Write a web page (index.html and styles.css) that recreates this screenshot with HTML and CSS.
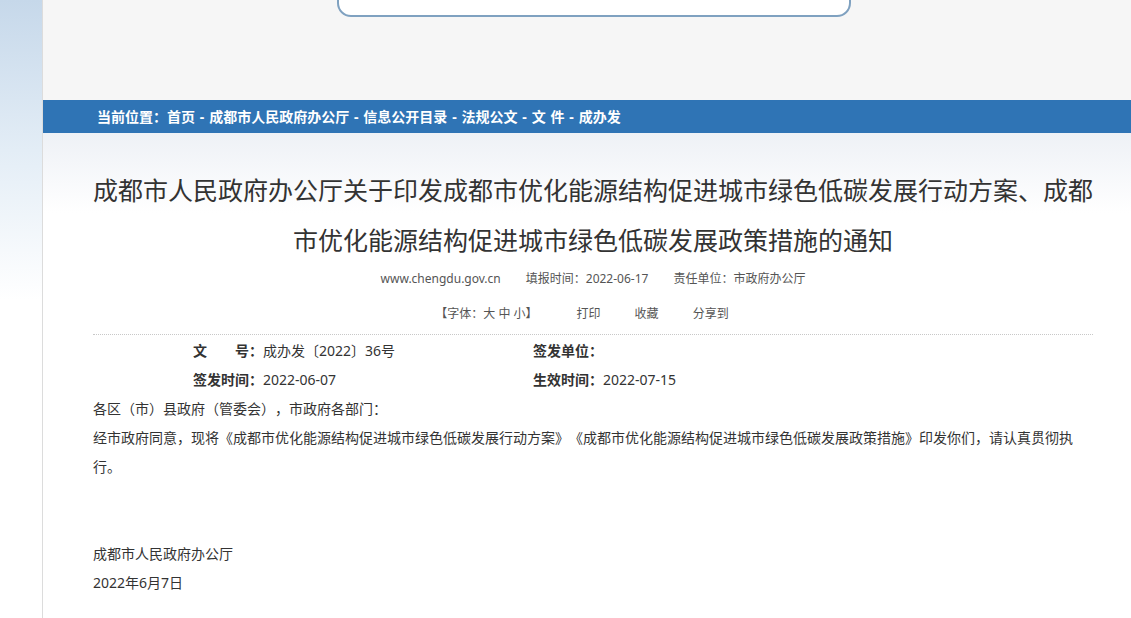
FILE: index.html
```html
<!DOCTYPE html>
<html lang="zh-CN">
<head>
  <meta charset="utf-8">
  <title>成都市人民政府办公厅关于印发成都市优化能源结构促进城市绿色低碳发展行动方案、成都市优化能源结构促进城市绿色低碳发展政策措施的通知</title>
  <link rel="stylesheet" href="styles.css">
</head>
<body>
  <div class="side"></div>
  <div class="main">
    <div class="header">
      <div class="search"></div>
    </div>
    <div class="crumb">
      <div class="wrap">当前位置：首页 - 成都市人民政府办公厅 - 信息公开目录 - 法规公文 - 文 件 - 成办发</div>
    </div>
    <div class="article">
      <div class="wrap">
        <h1 class="title">成都市人民政府办公厅关于印发成都市优化能源结构促进城市绿色低碳发展行动方案、成都市优化能源结构促进城市绿色低碳发展政策措施的通知</h1>
        <div class="meta">
          <span>www.chengdu.gov.cn</span>
          <span>填报时间：2022-06-17</span>
          <span>责任单位：市政府办公厅</span>
        </div>
        <div class="tools">
          <span>【字体：大 中 小】</span>
          <span>打印</span>
          <span>收藏</span>
          <span>分享到</span>
        </div>
        <div class="info">
          <div><b>文　　号：</b>成办发〔2022〕36号</div>
          <div><b>签发单位：</b></div>
          <div><b>签发时间：</b>2022-06-07</div>
          <div><b>生效时间：</b>2022-07-15</div>
        </div>
        <div class="content">
          <p>各区（市）县政府（管委会），市政府各部门：</p>
          <p>经市政府同意，现将《成都市优化能源结构促进城市绿色低碳发展行动方案》《成都市优化能源结构促进城市绿色低碳发展政策措施》印发你们，请认真贯彻执行。</p>
          <p>&nbsp;</p>
          <p>&nbsp;</p>
          <p>成都市人民政府办公厅</p>
          <p>2022年6月7日</p>
        </div>
      </div>
    </div>
  </div>
</body>
</html>
```

FILE: styles.css
```css
body {
  margin: 0;
  display: flex;
  min-height: 618px;
  font-family: "Noto Sans", "Noto Sans CJK SC", sans-serif;
  color: #333;
  background-color: #fff;
  overflow: hidden;
  text-spacing-trim: space-all;
}

.side {
  width: 42px;
  flex-shrink: 0;
  border-right: 1px solid #dcdcdc;
  background: linear-gradient(to bottom, #c6d8ea 0, #e3edf6 150px, #fff 300px);
}

.main {
  flex: 1;
  min-width: 0;
}

.wrap {
  width: 1000px;
  margin-left: 50px;
}

.header {
  height: 100px;
  background-color: #f6f6f6;
}

.search {
  width: 510px;
  height: 40px;
  margin-left: 294px;
  margin-top: -27px;
  display: inline-block;
  background-color: #fff;
  border: 2px solid #7fa1c0;
  border-radius: 14px;
}

.crumb {
  height: 33px;
  background-color: #2f74b5;
  border-top: 1px solid #2f74b5;
  box-sizing: border-box;
}

.crumb .wrap {
  margin-left: 54px;
  line-height: 31px;
  font-size: 14px;
  font-weight: bold;
  word-spacing: 1.2px;
  color: #fff;
}

.article {
  background: linear-gradient(to bottom, #eef1f6 0, #fff 80px);
  padding-top: 32px;
}

.title {
  margin: 0;
  font-size: 25px;
  font-weight: normal;
  line-height: 50px;
  text-align: center;
  color: #333;
}

.meta {
  display: flex;
  justify-content: center;
  gap: 25px;
  font-size: 12px;
  line-height: 28px;
  color: #555;
}

.tools {
  display: flex;
  justify-content: center;
  gap: 34px;
  margin-top: 7px;
  padding-right: 22px;
  font-size: 12px;
  line-height: 28px;
  color: #555;
}

.tools span:first-child {
  margin-right: 5px;
}

.info {
  margin-top: 6px;
  border-top: 1px dotted #c8c8c8;
  padding: 1px 0 0 100px;
  display: grid;
  grid-template-columns: 340px 1fr;
  font-size: 14px;
  line-height: 29px;
}

.info b {
  color: #333;
}

.content {
  font-size: 14px;
  line-height: 29px;
}

.content p {
  margin: 0;
}
```
